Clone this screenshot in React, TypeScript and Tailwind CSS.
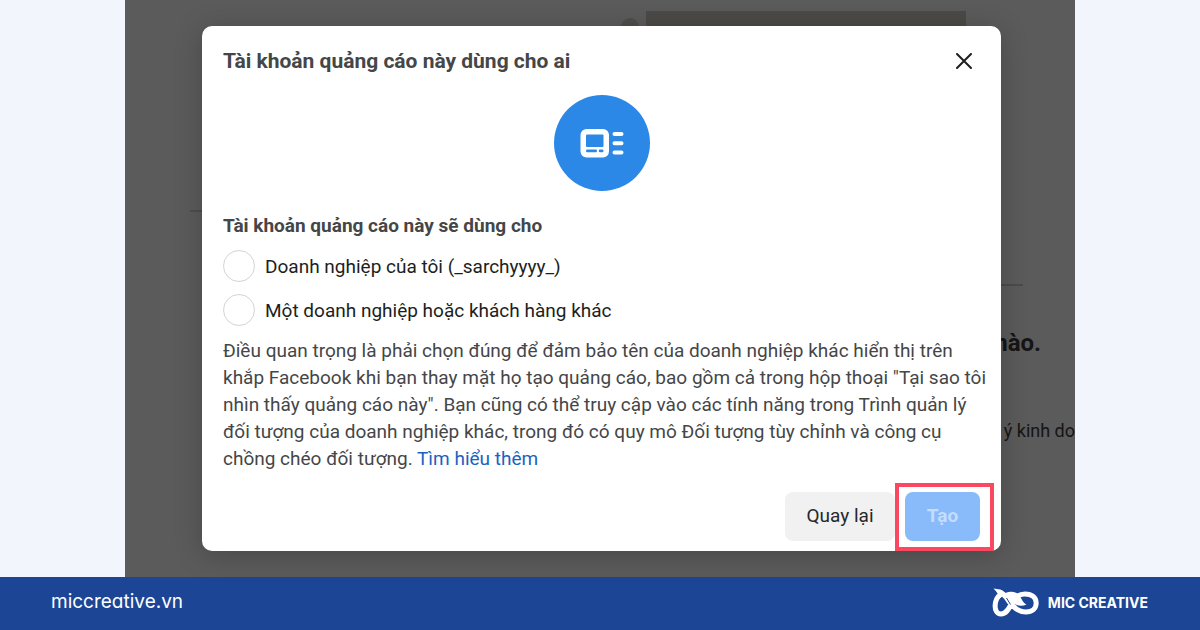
import React from 'react';

function AdAccountIcon() {
  return (
    <svg viewBox="0 0 96 96" className="h-24 w-24" aria-hidden="true">
      <circle cx="48" cy="48" r="48" fill="#2b88e6" />
      <rect x="26.500" y="34" width="28.500" height="28.500" rx="6" fill="#fff" />
      <rect x="32" y="39.500" width="17.500" height="12.500" rx="1" fill="#2b88e6" />
      <rect x="32" y="54.500" width="11" height="2.800" rx="1.200" fill="#2b88e6" />
      <rect x="44.800" y="54.500" width="4.700" height="2.800" rx="1.200" fill="#2b88e6" />
      <path d="M60.500 39h7M60.500 48.200h7M60.500 57.400h7" stroke="#fff" strokeWidth="4" strokeLinecap="round" />
    </svg>
  );
}

function CloseIcon() {
  return (
    <svg viewBox="0 0 16 16" className="h-4 w-4" aria-hidden="true">
      <path d="M1 1l14 14M15 1L1 15" stroke="#1c1e21" strokeWidth="2" strokeLinecap="round" />
    </svg>
  );
}

function BrandLogo() {
  return (
    <svg viewBox="0 0 48 30" className="h-[30px] w-12" fill="none" aria-hidden="true">
      <path
        d="M8.500 6.500C2 11 0.500 25.800 9 26C16 26 18 17 22 11.500C25 7.500 29 6 33 6C40 6 44.200 9.500 44.200 15C44.200 20.500 40 24 34 24C26 24 20 18 16 12C13.500 8 11 5 7 4"
        stroke="#fff"
        strokeWidth="5"
        strokeLinejoin="round"
      />
      <path d="M1.500 0.500C6 1.500 10 0.500 13 6L7 11C7 7 5 4 1.500 0.500Z" fill="#fff" />
      <path d="M13 5C23 1.500 27 6 29 10C30.500 13 32 15.500 34.500 16.500C29 19 23 17.500 19 13Z" fill="#fff" />
      <path d="M14.500 10L18.500 16.500" stroke="#1c4596" strokeWidth="1" />
    </svg>
  );
}

function BackgroundPage() {
  return (
    <div aria-hidden="true" className="col-start-1 row-start-1 flex min-w-0 flex-col overflow-hidden pt-[11px] text-[#151515]">
      <div className="mr-[109px] flex h-[60px] w-80 items-start self-end bg-[#4b4a47]">
        <span className="-ml-[25px] mt-[7px] h-[18px] w-[18px] rounded-full bg-[#4e4e4d]" />
      </div>
      <div className="ml-[65px] mt-[139px] h-[2px] w-10 bg-[#4e4e4e]" />
      <div className="mr-[52px] mt-[72px] h-[2px] w-10 self-end bg-[#4b4b4b]" />
      <p className="mt-[41px] pr-[34px] text-right text-2xl font-bold leading-8">nào.</p>
      <p className="mt-[60px] text-right text-lg leading-6">ý kinh do</p>
    </div>
  );
}

function Choice({ id, label }: { id: string; label: string }) {
  return (
    <div className="flex items-center gap-[10px]">
      <input
        id={id}
        type="radio"
        name="audience"
        className="h-8 w-8 shrink-0 appearance-none rounded-full border border-[#d4d4d4] bg-white checked:border-8 checked:border-[#2b88e6]"
      />
      <label htmlFor={id} className="pt-[2px] text-[19px] leading-[30px] text-[#1c1e21]">
        {label}
      </label>
    </div>
  );
}

function AccountDialog() {
  return (
    <section
      role="dialog"
      aria-labelledby="dialog-title"
      className="flex w-full flex-col rounded-[10px] bg-white pb-[10px] pl-[21px] pr-[21px] pt-[19px] shadow-[0_4px_28px_rgba(0,0,0,0.22)]"
    >
      <header className="flex items-center justify-between">
        <h1 id="dialog-title" className="text-[21px] font-bold leading-8 text-[#444648]">
          Tài khoản quảng cáo này dùng cho ai
        </h1>
        <button type="button" aria-label="Đóng" className="flex h-8 w-8 items-center justify-center">
          <CloseIcon />
        </button>
      </header>
      <div className="mt-[18px] flex justify-center">
        <AdAccountIcon />
      </div>
      <fieldset className="mt-[21px]">
        <legend className="text-[19px] font-bold leading-7 text-[#444648]">Tài khoản quảng cáo này sẽ dùng cho</legend>
        <div className="mt-[10px] flex flex-col gap-3">
          <Choice id="own-business" label="Doanh nghiệp của tôi (_sarchyyyy_)" />
          <Choice id="other-business" label="Một doanh nghiệp hoặc khách hàng khác" />
        </div>
      </fieldset>
      <p className="-mr-3 mt-[11px] text-[19px] leading-[27px] text-[#444648]">
        Điều quan trọng là phải chọn đúng để đảm bảo tên của doanh nghiệp khác hiển thị trên khắp Facebook khi bạn thay
        mặt họ tạo quảng cáo, bao gồm cả trong hộp thoại "Tại sao tôi nhìn thấy quảng cáo này". Bạn cũng có thể truy cập
        vào các tính năng trong Trình quản lý đối tượng của doanh nghiệp khác, trong đó có quy mô Đối tượng tùy chỉnh và
        công cụ chồng chéo đối tượng.{' '}
        <a href="#more" className="text-[#1b62c0]">
          Tìm hiểu thêm
        </a>
      </p>
      <footer className="mt-5 flex justify-end gap-[10px]">
        <button type="button" className="h-[49px] w-[110px] rounded-lg bg-[#f1f1f1] text-[19px] text-[#26282b]">
          Quay lại
        </button>
        <div className="relative">
          <button type="button" className="h-[49px] w-[75px] rounded-lg bg-[#89bbfb] text-[19px] font-bold text-[#c4ddfd]">
            Tạo
          </button>
          <span className="pointer-events-none absolute -bottom-[10px] -left-[10px] -right-[14px] -top-[9px] border-4 border-[#fa4860]" />
        </div>
      </footer>
    </section>
  );
}

export default function App() {
  return (
    <div className="flex min-h-screen flex-col bg-[#f2f6fc] font-['Roboto',sans-serif]">
      <main className="mx-auto grid w-full max-w-[950px] flex-1 bg-[#5b5b5b]">
        <BackgroundPage />
        <div className="z-10 col-start-1 row-start-1 flex items-start pb-[26px] pl-[77px] pr-[74px] pt-[26px]">
          <AccountDialog />
        </div>
      </main>
      <footer className="flex h-[53px] items-center justify-between bg-[#1c4596] pb-[2px] pl-[51px] pr-[52px] font-['Inter',sans-serif] text-white">
        <a href="#home" className="text-[19px] [font-feature-settings:'cv11']">
          miccreative.vn
        </a>
        <div className="flex items-center gap-2">
          <BrandLogo />
          <span className="text-sm font-bold">MIC CREATIVE</span>
        </div>
      </footer>
    </div>
  );
}
